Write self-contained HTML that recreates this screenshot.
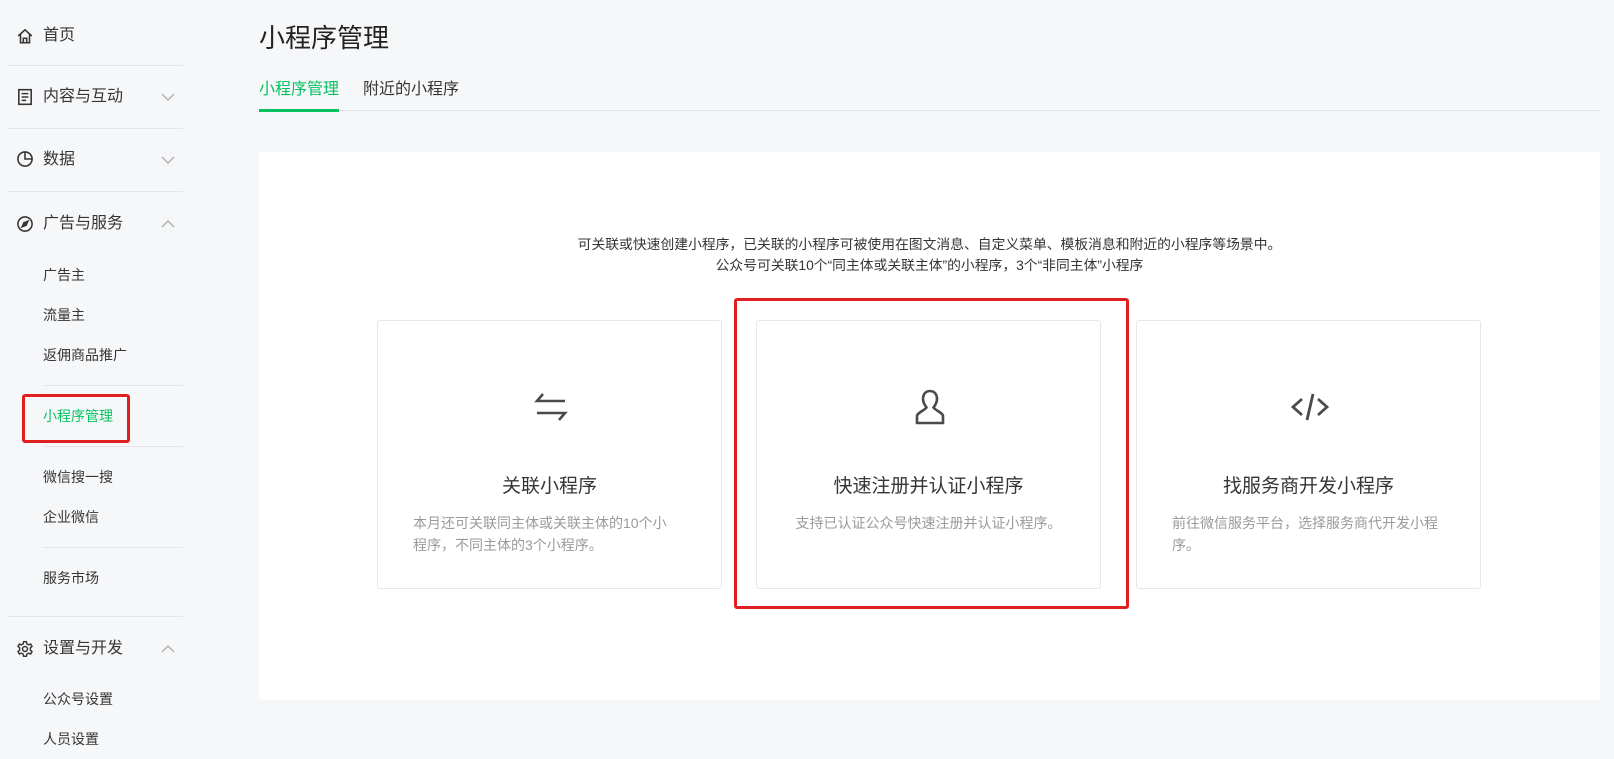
<!DOCTYPE html>
<html><head><meta charset="utf-8"><style>
*{margin:0;padding:0;box-sizing:border-box}
body{width:1614px;height:759px;background:#f6f7f9;font-family:"Liberation Sans","Noto Sans CJK SC",sans-serif;color:#353535;position:relative;overflow:hidden}
.a{position:absolute;white-space:nowrap}
.m{font-size:16px;line-height:20px;left:43px}
.s{font-size:14px;line-height:18px;left:43px}
.hr{position:absolute;height:1px;background:#e4e6e9}
.ic{position:absolute;left:16px}
.chev{position:absolute;left:161px}
.card{position:absolute;top:320px;width:345px;height:269px;background:#fff;border:1px solid #e6e7e9;border-radius:3px}
.card .t{position:absolute;top:150px;left:0;right:0;text-align:center;font-size:19px;color:#353535}
.card .d{position:absolute;top:191px;left:35px;right:35px;font-size:14px;line-height:22px;color:#9a9a9a;white-space:normal}
.card svg{position:absolute;left:152px;top:65px}
</style></head><body>
<svg class="ic" style="top:27px" width="18" height="18" viewBox="0 0 16 16" fill="none" stroke="#353535" stroke-width="1.4"><path d="M2 8L8 2.5L14 8M4 6.5V14H12V6.5M6.5 14V10H9.5V14"/></svg>
<div class="a m" style="top:26px">首页</div>
<div class="hr" style="left:8px;width:175px;top:65px"></div>
<svg class="ic" style="top:88px" width="18" height="18" viewBox="0 0 16 16" fill="none" stroke="#353535" stroke-width="1.4"><rect x="2.5" y="1.5" width="11" height="13"/><path d="M5 5H11M5 8H11M5 11H9"/></svg>
<div class="a m" style="top:87px">内容与互动</div>
<svg class="chev" style="top:93px" width="14" height="8"><path d="M1 1L7 7L13 1" fill="none" stroke="#b3b3b3" stroke-width="1.5"/></svg>
<div class="hr" style="left:8px;width:175px;top:128px"></div>
<svg class="ic" style="top:150px" width="18" height="18" viewBox="0 0 16 16" fill="none" stroke="#353535" stroke-width="1.4"><circle cx="8" cy="8" r="6.3"/><path d="M8 1.7V8H14.3"/></svg>
<div class="a m" style="top:150px">数据</div>
<svg class="chev" style="top:156px" width="14" height="8"><path d="M1 1L7 7L13 1" fill="none" stroke="#b3b3b3" stroke-width="1.5"/></svg>
<div class="hr" style="left:8px;width:175px;top:191px"></div>
<svg class="ic" style="top:215px" width="18" height="18" viewBox="0 0 16 16" fill="none" stroke="#353535" stroke-width="1.4"><circle cx="8" cy="8" r="6.3"/><path d="M10.5 5.5L9 9L5.5 10.5L7 7Z" fill="#353535"/></svg>
<div class="a m" style="top:214px">广告与服务</div>
<svg class="chev" style="top:220px" width="14" height="8"><path d="M1 7L7 1L13 7" fill="none" stroke="#b3b3b3" stroke-width="1.5"/></svg>
<div class="a s" style="top:266px">广告主</div>
<div class="a s" style="top:306px">流量主</div>
<div class="a s" style="top:346px">返佣商品推广</div>
<div class="hr" style="left:43px;width:140px;top:385px"></div>
<div class="a s" style="top:407px;color:#07c160">小程序管理</div>
<div style="position:absolute;left:22px;top:394px;width:108px;height:49px;border:3px solid #e02020;border-radius:3px"></div>
<div class="hr" style="left:43px;width:140px;top:446px"></div>
<div class="a s" style="top:468px">微信搜一搜</div>
<div class="a s" style="top:508px">企业微信</div>
<div class="hr" style="left:43px;width:140px;top:547px"></div>
<div class="a s" style="top:569px">服务市场</div>
<div class="hr" style="left:8px;width:175px;top:616px"></div>
<svg class="ic" style="top:640px" width="18" height="18" viewBox="0 0 16 16" fill="none" stroke="#353535" stroke-width="1.3"><path d="M6.8 1.5H9.2L9.6 3.4L11.2 4.3L13 3.6L14.2 5.7L12.8 7V9L14.2 10.3L13 12.4L11.2 11.7L9.6 12.6L9.2 14.5H6.8L6.4 12.6L4.8 11.7L3 12.4L1.8 10.3L3.2 9V7L1.8 5.7L3 3.6L4.8 4.3L6.4 3.4Z"/><circle cx="8" cy="8" r="2.2"/></svg>
<div class="a m" style="top:639px">设置与开发</div>
<svg class="chev" style="top:645px" width="14" height="8"><path d="M1 7L7 1L13 7" fill="none" stroke="#b3b3b3" stroke-width="1.5"/></svg>
<div class="a s" style="top:690px">公众号设置</div>
<div class="a s" style="top:730px">人员设置</div>

<div class="a" style="left:259px;top:22px;font-size:26px;line-height:32px;color:#222">小程序管理</div>
<div class="a" style="left:259px;top:80px;font-size:16px;line-height:20px;color:#07c160">小程序管理</div>
<div class="a" style="left:363px;top:80px;font-size:16px;line-height:20px">附近的小程序</div>
<div class="hr" style="left:259px;width:1341px;top:110px;background:#dfe1e4"></div>
<div style="position:absolute;left:259px;top:109px;width:80px;height:3px;background:#07c160"></div>

<div style="position:absolute;left:259px;top:152px;width:1341px;height:548px;background:#fff;border-radius:3px"></div>
<div class="a" style="left:259px;width:1341px;top:234px;text-align:center;font-size:13.8px;line-height:21px;color:#353535">可关联或快速创建小程序，已关联的小程序可被使用在图文消息、自定义菜单、模板消息和附近的小程序等场景中。<br>公众号可关联10个“同主体或关联主体”的小程序，3个“非同主体”小程序</div>

<div class="card" style="left:377px">
<svg width="42" height="42" viewBox="0 0 42 42" fill="none" stroke="#4a4a4a" stroke-width="2.6"><path d="M13 8L7 15H35M29 34L35 27H7"/></svg>
<div class="t">关联小程序</div>
<div class="d" style="right:48px">本月还可关联同主体或关联主体的10个小程序，不同主体的3个小程序。</div></div>
<div class="card" style="left:756px">
<svg width="42" height="42" viewBox="0 0 42 42" fill="none" stroke="#4a4a4a" stroke-width="2.6"><path d="M21 5C16 5 14 9 14 13C14 17 16.5 20 17.5 21.5C16 24 8 27 8 30V37H34V30C34 27 26 24 24.5 21.5C25.5 20 28 17 28 13C28 9 26 5 21 5Z"/></svg>
<div class="t">快速注册并认证小程序</div>
<div class="d" style="text-align:center;left:15px;right:15px">支持已认证公众号快速注册并认证小程序。</div></div>
<div class="card" style="left:1136px">
<svg width="42" height="42" viewBox="0 0 42 42" fill="none" stroke="#4a4a4a" stroke-width="2.8"><path d="M13 13L4 21L13 29M29 13L38 21L29 29M24 8L18 34"/></svg>
<div class="t">找服务商开发小程序</div>
<div class="d">前往微信服务平台，选择服务商代开发小程序。</div></div>
<div style="position:absolute;left:734px;top:298px;width:395px;height:311px;border:3px solid #e02020;border-radius:3px"></div>
</body></html>
